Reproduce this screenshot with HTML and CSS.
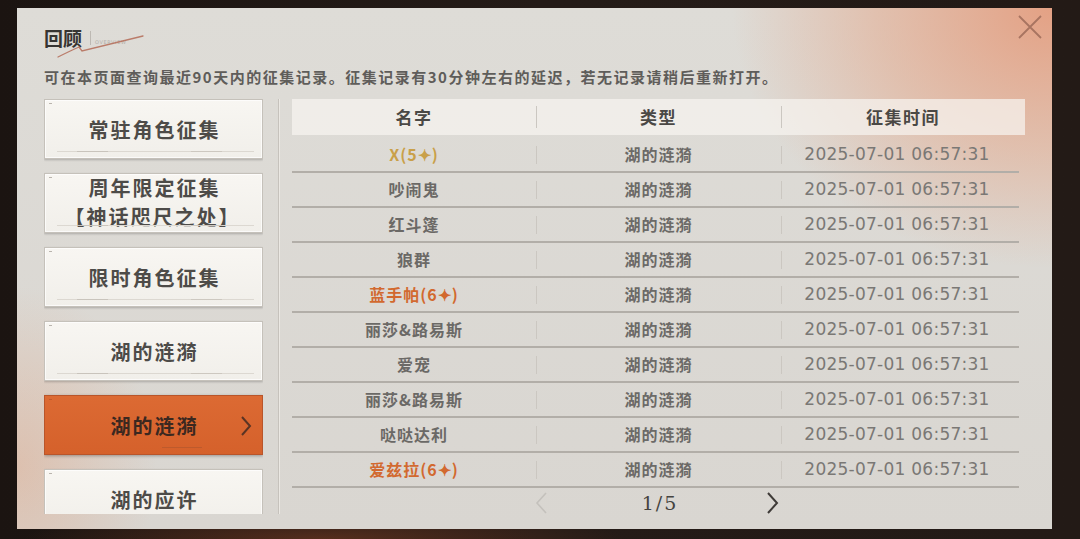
FILE: index.html
```html
<!DOCTYPE html>
<html lang="zh-CN">
<head>
<meta charset="utf-8">
<title>回顾</title>
<link rel="stylesheet" href="styles.css">
</head>
<body>
<div class="screen">
  <div class="panel">
    <div class="title-row">
      <span class="title">回顾</span>
      <span class="title-sub">OVERVIEW</span>
      <svg class="brush" width="110" height="36" viewBox="0 0 110 36" aria-hidden="true">
        <path d="M14 31 Q26 25 35 21 L38 25 Q66 18 99 10" fill="none" stroke="#b46b57" stroke-width="1.3" stroke-linecap="round" opacity="0.85"/>
      </svg>
    </div>
    <p class="desc">可在本页面查询最近90天内的征集记录。征集记录有30分钟左右的延迟，若无记录请稍后重新打开。</p>
    <div class="main">
      <div class="tabs">
        <div class="tab"><span class="tab-text">常驻角色征集</span></div>
        <div class="tab two"><span class="tab-text">周年限定征集<br><span class="wide">【神话咫尺之处】</span></span></div>
        <div class="tab"><span class="tab-text">限时角色征集</span></div>
        <div class="tab"><span class="tab-text">湖的涟漪</span></div>
        <div class="tab active"><span class="tab-text">湖的涟漪</span>
          <svg class="tab-arrow" width="12" height="22" viewBox="0 0 12 22" aria-hidden="true"><path d="M2 2 L10 11 L2 20" fill="none" stroke="#5a3424" stroke-width="2"/></svg>
        </div>
        <div class="tab"><span class="tab-text">湖的应许</span></div>
      </div>
      <div class="divider"></div>
      <div class="table">
        <div class="thead">
          <div class="th">名字</div>
          <div class="th sep">类型</div>
          <div class="th sep">征集时间</div>
        </div>
        <div class="tbody">
          <div class="tr"><div class="td name gold">X(5✦)</div><div class="td type sep">湖的涟漪</div><div class="td date sep">2025-07-01 06:57:31</div></div>
          <div class="tr"><div class="td name">吵闹鬼</div><div class="td type sep">湖的涟漪</div><div class="td date sep">2025-07-01 06:57:31</div></div>
          <div class="tr"><div class="td name">红斗篷</div><div class="td type sep">湖的涟漪</div><div class="td date sep">2025-07-01 06:57:31</div></div>
          <div class="tr"><div class="td name">狼群</div><div class="td type sep">湖的涟漪</div><div class="td date sep">2025-07-01 06:57:31</div></div>
          <div class="tr"><div class="td name orange">蓝手帕(6✦)</div><div class="td type sep">湖的涟漪</div><div class="td date sep">2025-07-01 06:57:31</div></div>
          <div class="tr"><div class="td name">丽莎&amp;路易斯</div><div class="td type sep">湖的涟漪</div><div class="td date sep">2025-07-01 06:57:31</div></div>
          <div class="tr"><div class="td name">爱宠</div><div class="td type sep">湖的涟漪</div><div class="td date sep">2025-07-01 06:57:31</div></div>
          <div class="tr"><div class="td name">丽莎&amp;路易斯</div><div class="td type sep">湖的涟漪</div><div class="td date sep">2025-07-01 06:57:31</div></div>
          <div class="tr"><div class="td name">哒哒达利</div><div class="td type sep">湖的涟漪</div><div class="td date sep">2025-07-01 06:57:31</div></div>
          <div class="tr"><div class="td name orange">爱兹拉(6✦)</div><div class="td type sep">湖的涟漪</div><div class="td date sep">2025-07-01 06:57:31</div></div>
        </div>
        <div class="pager">
          <svg class="pg-btn" width="14" height="24" viewBox="0 0 14 24" aria-hidden="true"><path d="M12 2 L3 12 L12 22" fill="none" stroke="#c4c1bc" stroke-width="1.6"/></svg>
          <span class="pg-num">1/5</span>
          <svg class="pg-btn" width="14" height="24" viewBox="0 0 14 24" aria-hidden="true"><path d="M2 2 L11 12 L2 22" fill="none" stroke="#3f3b38" stroke-width="2"/></svg>
        </div>
      </div>
    </div>
    <div class="close" aria-label="关闭">
      <svg width="24" height="24" viewBox="0 0 24 24" aria-hidden="true"><path d="M1 1 L23 23 M23 1 L1 23" fill="none" stroke="#a87461" stroke-width="1.8"/></svg>
    </div>
  </div>
</div>
</body>
</html>
```

FILE: styles.css
```css
* { box-sizing: border-box; }
html, body { margin: 0; padding: 0; }
body {
  width: 1080px;
  height: 539px;
  overflow: hidden;
  background:
    radial-gradient(ellipse 300px 30px at 30% 100%, rgba(120,60,35,0.6), rgba(120,60,35,0)),
    linear-gradient(90deg, #1b1411 0%, #241b17 50%, #231a16 100%);
  font-family: "Noto Sans CJK SC", sans-serif;
}
.screen {
  height: 539px;
  padding: 8px 28px 10px 17px;
}
.panel {
  position: relative;
  height: 521px;
  padding: 18px 27px 0;
  background:
    radial-gradient(ellipse 320px 260px at 100% 0%, rgba(228,158,128,0.95), rgba(228,165,135,0.5) 55%, rgba(228,170,140,0) 100%),
    radial-gradient(ellipse 140px 180px at 0% 88%, rgba(226,150,110,0.35), rgba(226,150,110,0)),
    linear-gradient(180deg, #dedcd7 0%, #d9d6d1 100%);
}

/* title */
.title-row {
  position: relative;
  display: flex;
  align-items: center;
  height: 24px;
}
.title {
  font-size: 19px;
  font-weight: 700;
  color: #363432;
  line-height: 24px;
}
.title-sub {
  margin-left: 8px;
  padding-left: 4px;
  border-left: 1px solid #bdb9b3;
  height: 14px;
  display: flex;
  align-items: flex-end;
  font-family: "DejaVu Sans", sans-serif;
  font-size: 5px;
  letter-spacing: 0.6px;
  color: #b3aea7;
  line-height: 6px;
}
.brush {
  position: absolute;
  left: 0;
  top: 0;
}

.desc {
  margin: 17px 0 0;
  font-size: 15px;
  line-height: 20px;
  letter-spacing: 1.5px;
  font-weight: 700;
  color: #5f5d5a;
  white-space: nowrap;
}

/* main */
.main {
  display: flex;
  align-items: flex-start;
  margin-top: 12px;
  height: 420px;
}
.tabs {
  width: 219px;
  height: 415px;
  overflow: hidden;
  display: flex;
  flex-direction: column;
  gap: 14px;
  flex-shrink: 0;
}
.tab {
  position: relative;
  flex-shrink: 0;
  height: 60px;
  display: flex;
  align-items: center;
  justify-content: center;
  padding-left: 2px;
  background: linear-gradient(180deg, #f8f6f2 0%, #f1efea 100%);
  border: 1px solid #c5c1ba;
  box-shadow: 0 1px 2px rgba(0,0,0,0.22), inset 0 0 0 1px rgba(255,255,255,0.7);
  font-size: 20px;
  font-weight: 700;
  color: #4d4b48;
  letter-spacing: 2px;
  text-align: center;
  line-height: 29px;
}
.tab::after {
  content: "";
  position: absolute;
  left: 12px;
  right: 8px;
  bottom: 6px;
  height: 1px;
  background: linear-gradient(90deg,
    #dcd8d1 0 10%, #c9c4bc 10% 26%, #dcd8d1 26% 68%, #cdc8c0 68% 84%, #dcd8d1 84% 100%);
}
.tab::before {
  content: "";
  position: absolute;
  left: 4px;
  top: 3px;
  width: 3px;
  height: 1px;
  background: #b9b4ad;
}
.tab .wide { margin-left: -4px; }
.tab.two .tab-text { margin-top: -2px; }
.tab.active {
  background: linear-gradient(180deg, #dc6a33 0%, #d5612b 100%);
  border-color: #b9552a;
  box-shadow: 0 1px 3px rgba(0,0,0,0.3);
  color: #3b2820;
}
.tab.active::after {
  left: auto;
  right: 60px;
  width: 40px;
  background: #be5a2c;
}
.tab.active::before { background: #c2592b; }
.tab-arrow {
  position: absolute;
  right: 10px;
  top: 19px;
}

.divider {
  width: 2px;
  height: 415px;
  margin: 0 12px 0 15px;
  border-left: 1px solid #c6c2bc;
  border-right: 1px solid #ebe8e3;
  flex-shrink: 0;
}

/* table */
.table {
  width: 733px;
  display: flex;
  flex-direction: column;
}
.thead {
  display: grid;
  grid-template-columns: 244px 245px 1fr;
  height: 36px;
  background: rgba(246,244,240,0.72);
}
.th {
  text-align: center;
  font-size: 17px;
  font-weight: 700;
  color: #4a4845;
  letter-spacing: 1.5px;
  line-height: 36px;
}
.sep {
  background-image: linear-gradient(#cbc7c1, #cbc7c1);
  background-size: 1px 18px;
  background-position: left center;
  background-repeat: no-repeat;
}
.th.sep { background-size: 1px 22px; }
.tbody {
  padding-top: 3px;
  width: 727px;
}
.tr {
  display: grid;
  grid-template-columns: 244px 245px 1fr;
  height: 35px;
  border-bottom: 2px solid #b2aea8;
}
.td {
  text-align: center;
  line-height: 33px;
  font-size: 16px;
  font-weight: 700;
  color: #6b6966;
  letter-spacing: 1px;
  white-space: nowrap;
}
.td.name.gold { color: #c9a049; }
.td.name.orange { color: #d2692f; }
.td.type { color: #6c6a67; }
.td.date {
  font-family: "DejaVu Sans", sans-serif;
  font-weight: 400;
  font-size: 17px;
  letter-spacing: 0.25px;
  color: #7a7875;
  padding-right: 6px;
}

.pager {
  margin-left: 242px;
  width: 246px;
  height: 30px;
  display: flex;
  align-items: center;
  justify-content: space-between;
}
.pg-btn { display: block; }
.pg-num {
  font-family: "DejaVu Serif", serif;
  font-size: 19px;
  letter-spacing: 2px;
  color: #454340;
  padding-left: 6px;
}

.close {
  position: absolute;
  top: 7px;
  right: 10px;
  width: 24px;
  height: 24px;
}
.close svg { display: block; }
```
